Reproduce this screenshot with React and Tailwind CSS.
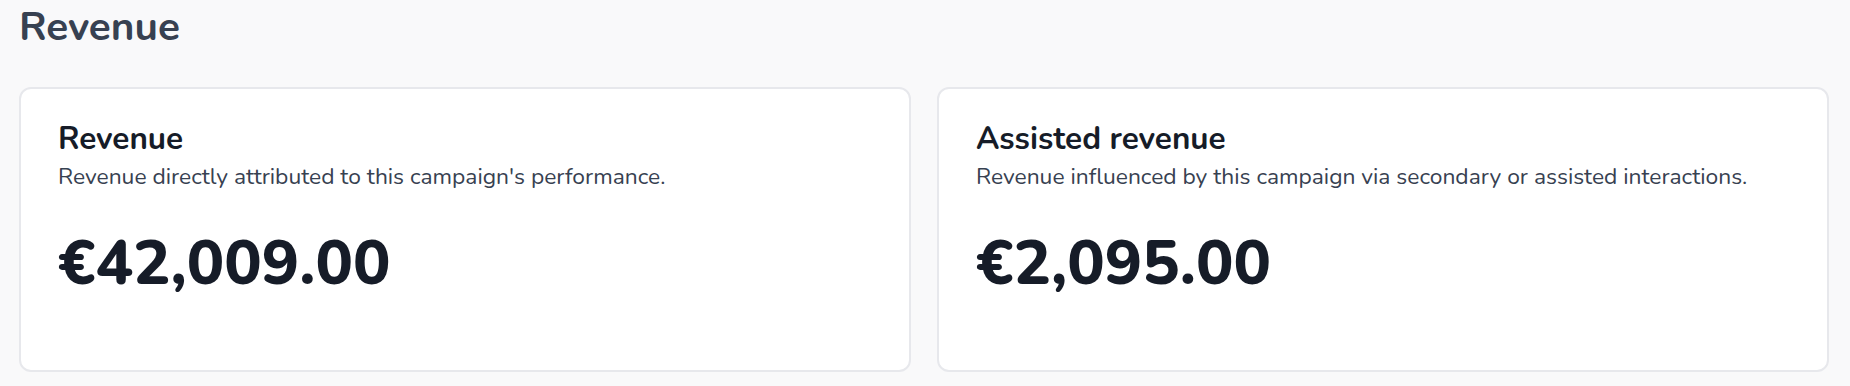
import React from "react";

const font = { fontFamily: '"Nunito", Lato, "Noto Sans", sans-serif' };

function Card({ title, desc, value }) {
  return (
    <div className="bg-white border-2 border-[#e7e8ec] rounded-[12px] px-[37px] pt-[31px] pb-[70px]">
      <div className="text-[31.5px] leading-[38px] font-bold text-[#161c28]">{title}</div>
      <div className="mt-[4px] text-[22.8px] leading-[30px] text-[#374151]">{desc}</div>
      <div className="mt-[36px] text-[62.5px] leading-[72px] font-extrabold text-[#161c28]">{value}</div>
    </div>
  );
}

export default function App() {
  return (
    <div className="w-[1850px] h-[386px] bg-[#f9f9fa] pl-[19px] pr-[21px] pt-[3px]" style={font}>
      <h1 className="text-[40.5px] leading-[48px] font-bold text-[#374151]">Revenue</h1>
      <div className="mt-[36px] grid grid-cols-2 gap-[26px]">
        <Card
          title="Revenue"
          desc="Revenue directly attributed to this campaign's performance."
          value="€42,009.00"
        />
        <Card
          title="Assisted revenue"
          desc="Revenue influenced by this campaign via secondary or assisted interactions."
          value="€2,095.00"
        />
      </div>
    </div>
  );
}
